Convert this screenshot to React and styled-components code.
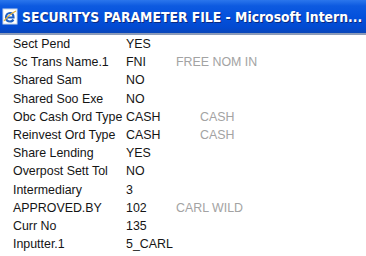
import React from "react";
import styled, { createGlobalStyle } from "styled-components";

const GlobalStyle = createGlobalStyle`
  html, body {
    margin: 0;
    padding: 0;
    background: #fff;
  }
  body {
    width: 366px;
    height: 256px;
    overflow: hidden;
  }
`;

const rows = [
  { label: "Sect Pend", value: "YES" },
  { label: "Sc Trans Name.1", value: "FNI", extra: "FREE NOM IN", offset: 50 },
  { label: "Shared Sam", value: "NO" },
  { label: "Shared Soo Exe", value: "NO" },
  { label: "Obc Cash Ord Type", value: "CASH", extra: "CASH", offset: 74 },
  { label: "Reinvest Ord Type", value: "CASH", extra: "CASH", offset: 74 },
  { label: "Share Lending", value: "YES" },
  { label: "Overpost Sett Tol", value: "NO" },
  { label: "Intermediary", value: "3" },
  { label: "APPROVED.BY", value: "102", extra: "CARL WILD", offset: 50 },
  { label: "Curr No", value: "135" },
  { label: "Inputter.1", value: "5_CARL" },
];

const IeIcon = () => (
  <IconBox width="16" height="17" viewBox="0 0 16 17">
    <rect x="1" y="1" width="14" height="15" fill="#fff" stroke="#c9d6ea" />
    <path
      d="M4 9.5 H11.5 C11.5 6.5 10 5 8 5 C5.8 5 4 7 4 9.5 C4 12 5.8 13.5 8 13.5 C9.6 13.5 10.8 12.8 11.3 11.5"
      fill="none"
      stroke="#1d5fc4"
      strokeWidth="2.2"
    />
    <path d="M2 13 C5 9 10 5 14 3" fill="none" stroke="#e2b13c" strokeWidth="1.2" />
  </IconBox>
);

const App = () => (
  <>
    <GlobalStyle />
    <Window>
      <TitleBar>
        <IeIcon />
        <Title>SECURITYS PARAMETER FILE - Microsoft Intern...</Title>
      </TitleBar>
      <Table>
        {rows.map((r) => (
          <Row key={r.label}>
            <Label>{r.label}</Label>
            <Value>{r.value}</Value>
            {r.extra && <Extra $offset={r.offset}>{r.extra}</Extra>}
          </Row>
        ))}
      </Table>
    </Window>
  </>
);

const Window = styled.div`
  width: 366px;
  height: 256px;
  display: flex;
  flex-direction: column;
  background: #fff;
`;

const TitleBar = styled.div`
  height: 33px;
  flex-shrink: 0;
  display: flex;
  align-items: center;
  gap: 4px;
  padding: 0 0 0 2px;
  overflow: hidden;
  background: linear-gradient(
    180deg,
    #2b76ec 0%,
    #0d5ae0 18%,
    #0451dc 50%,
    #0249d0 85%,
    #0a46b8 100%
  );
  border-bottom: 2px solid #8c9bb8;
`;

const IconBox = styled.svg`
  flex-shrink: 0;
`;

const Title = styled.span`
  font-family: "DejaVu Sans Condensed", "DejaVu Sans", sans-serif;
  font-stretch: condensed;
  font-weight: bold;
  font-size: 13.8px;
  color: #fff;
  white-space: nowrap;
  text-shadow: 1px 1px 0 #0a2a80;
`;

const Table = styled.div`
  display: flex;
  flex-direction: column;
  padding: 0 0 0 13px;
`;

const Row = styled.div`
  height: 18.2px;
  display: flex;
  align-items: center;
  font-family: "Liberation Sans", Arial, sans-serif;
  font-size: 12.4px;
  color: #151515;
  white-space: nowrap;
`;

const Label = styled.span`
  width: 113px;
`;

const Value = styled.span`
  width: 0;
`;

const Extra = styled.span`
  margin-left: ${(p) => p.$offset}px;
  color: #a3a3a3;
`;

export default App;
